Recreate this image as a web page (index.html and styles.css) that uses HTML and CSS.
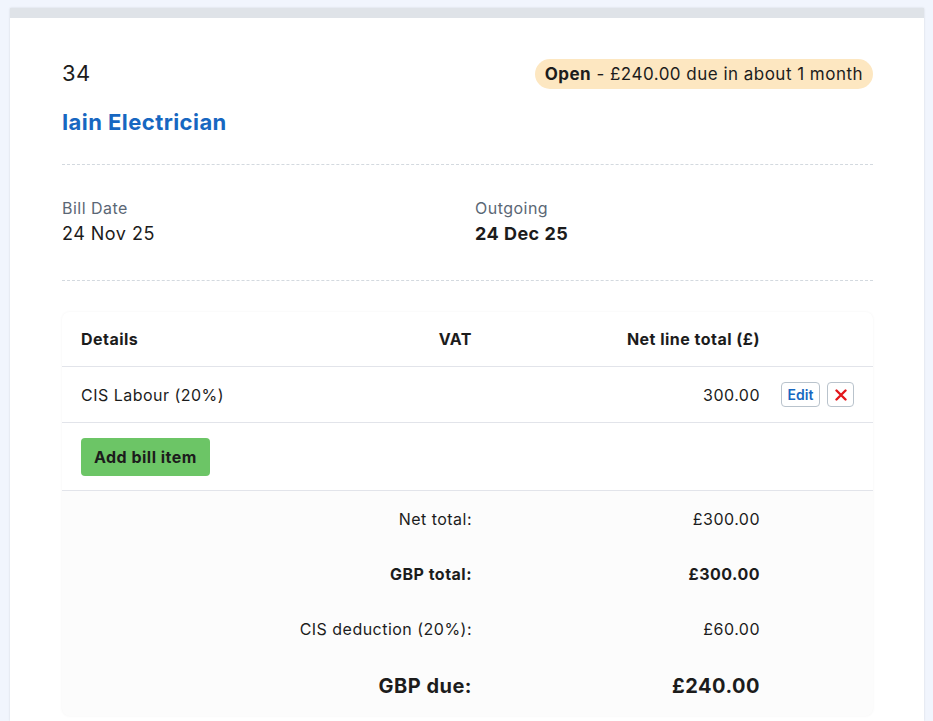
FILE: index.html
```html
<!DOCTYPE html>
<html lang="en">
<head>
    <meta charset="UTF-8">
    <meta name="viewport" content="width=device-width, initial-scale=1.0">
    <title>Bill 34 - Iain Electrician</title>
    <link rel="stylesheet" href="styles.css">
</head>
<body>

<div class="card">

    <div class="bill-header">
        <div>
            <div class="bill-number">34</div>
            <a class="supplier" href="#">Iain Electrician</a>
        </div>
        <span class="status-badge"><strong>Open</strong> - £240.00 due in about 1 month</span>
    </div>

    <div class="bill-dates">
        <div class="date-col">
            <div class="date-label">Bill Date</div>
            <div class="date-value">24 Nov 25</div>
        </div>
        <div class="date-col">
            <div class="date-label">Outgoing</div>
            <div class="date-value bold">24 Dec 25</div>
        </div>
    </div>

    <div class="items">
        <div class="row head-row">
            <div>Details</div>
            <div class="right">VAT</div>
            <div class="right">Net line total (£)</div>
            <div></div>
        </div>

        <div class="row item-row">
            <div>CIS Labour (20%)</div>
            <div class="right"></div>
            <div class="right">300.00</div>
            <div class="actions">
                <button class="btn-edit">Edit</button>
                <button class="btn-delete" title="Delete">
                    <svg width="12" height="12" viewBox="0 0 12 12">
                        <path d="M1.5 1.5 L10.5 10.5 M10.5 1.5 L1.5 10.5" stroke="#e3161b" stroke-width="2.4" stroke-linecap="round"/>
                    </svg>
                </button>
            </div>
        </div>

        <div class="add-row">
            <button class="btn-add">Add bill item</button>
        </div>

        <div class="totals">
            <div class="row total-row">
                <div class="label">Net total:</div>
                <div class="right">£300.00</div>
            </div>
            <div class="row total-row bold">
                <div class="label">GBP total:</div>
                <div class="right">£300.00</div>
            </div>
            <div class="row total-row">
                <div class="label">CIS deduction (20%):</div>
                <div class="right">£60.00</div>
            </div>
            <div class="row total-row due">
                <div class="label">GBP due:</div>
                <div class="right">£240.00</div>
            </div>
        </div>
    </div>

</div>

</body>
</html>
```

FILE: styles.css
```css
/* Global styles */

* {
  box-sizing: border-box;
  margin: 0;
  padding: 0;
}

body {
  font-family: Inter, "Open Sans", sans-serif;
  color: #1c1c1c;
  background-color: #f1f5fd;
  padding: 8px 9px 0 10px;
  font-size: 16px;
  letter-spacing: 0.03em;
}

/* Card */

.card {
  background-color: #ffffff;
  border-top: 10px solid #dfe3e8;
  box-shadow: 0 0 2px rgba(0, 0, 0, 0.12);
  padding: 40px 51px 0 52px;
  min-height: 713px;
}

/* Header */

.bill-header {
  display: flex;
  justify-content: space-between;
  align-items: flex-start;
  padding-bottom: 28px;
  border-bottom: 1px dashed #d3d9df;
}

.bill-number {
  font-size: 22px;
  line-height: 30px;
}

.supplier {
  display: block;
  margin-top: 20px;
  font-size: 22px;
  line-height: 28px;
  font-weight: 700;
  color: #1767c1;
  text-decoration: none;
  letter-spacing: 0.02em;
}

.status-badge {
  margin-top: 1px;
  background-color: #fde7c1;
  border-radius: 15px;
  padding: 0 10px;
  line-height: 30px;
  font-size: 17px;
}

/* Dates */

.bill-dates {
  display: flex;
  padding: 32px 0 33px;
  border-bottom: 1px dashed #d3d9df;
}

.date-col {
  width: 413px;
  flex-shrink: 0;
}

.date-col + .date-col {
  width: auto;
}

.date-label {
  color: #5b6775;
  line-height: 22px;
}

.date-value {
  margin-top: 2px;
  font-size: 18px;
  line-height: 26px;
}

.bold {
  font-weight: 700;
}

/* Items table */

.items {
  margin-top: 31px;
  border-radius: 8px;
  background-color: #fcfcfc;
  box-shadow: 0 0 3px rgba(0, 0, 0, 0.05);
  overflow: hidden;
}

.row {
  display: grid;
  grid-template-columns: 1fr 120px 288px 94px;
  align-items: center;
  padding: 0 19px;
}

.right {
  text-align: right;
}

.head-row {
  height: 55px;
  font-weight: 700;
  background-color: #ffffff;
  border-bottom: 1px solid #e2e4ea;
}

.item-row {
  height: 56px;
  background-color: #ffffff;
  border-bottom: 1px solid #e2e4ea;
}

.actions {
  display: flex;
  gap: 7px;
  padding-left: 21px;
}

.btn-edit,
.btn-delete {
  height: 25px;
  background-color: #ffffff;
  border: 1px solid #b9c3cc;
  border-radius: 4px;
  cursor: pointer;
  font-family: inherit;
}

.btn-edit {
  width: 39px;
  color: #1767c1;
  font-size: 14px;
  font-weight: 600;
  letter-spacing: 0;
}

.btn-delete {
  width: 27px;
  display: flex;
  align-items: center;
  justify-content: center;
}

.add-row {
  padding: 15px 19px 14px;
  background-color: #ffffff;
  border-bottom: 1px solid #e2e4ea;
}

.btn-add {
  height: 38px;
  padding: 0 13px;
  background-color: #6cc566;
  color: #1c1c1c;
  border: none;
  border-radius: 4px;
  font-family: inherit;
  font-size: 16px;
  font-weight: 700;
  letter-spacing: 0.03em;
  cursor: pointer;
}

/* Totals */

.total-row {
  height: 55px;
  grid-template-columns: 1fr 288px 94px;
}

.total-row .label {
  text-align: right;
}

.due {
  height: 60px;
  font-size: 20px;
  font-weight: 700;
}
```
